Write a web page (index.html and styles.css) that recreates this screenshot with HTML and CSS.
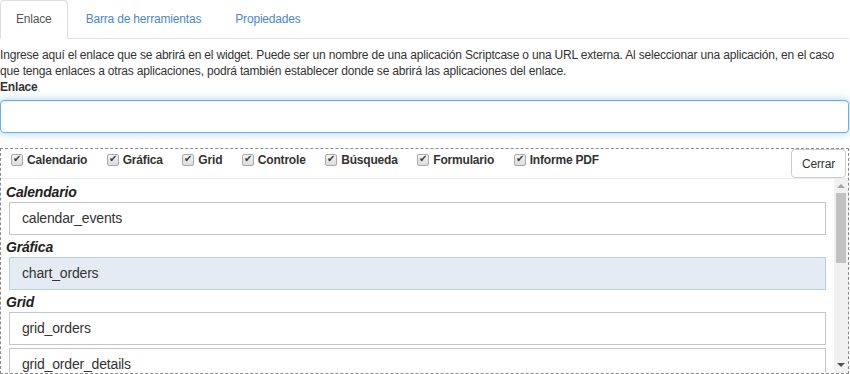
FILE: index.html
```html
<!DOCTYPE html>
<html lang="es">
<head>
    <meta charset="UTF-8">
    <title>Enlace</title>
    <link rel="stylesheet" href="styles.css">
</head>
<body>
    <div class="page">
        <ul class="tabs">
            <li class="tab active"><a>Enlace</a></li>
            <li class="tab"><a>Barra de herramientas</a></li>
            <li class="tab"><a>Propiedades</a></li>
        </ul>

        <div class="desc">
            <p>Ingrese aquí el enlace que se abrirá en el widget. Puede ser un nombre de una aplicación Scriptcase o una URL externa. Al seleccionar una aplicación, en el caso que tenga enlaces a otras aplicaciones, podrá también establecer donde se abrirá las aplicaciones del enlace.</p>
            <label class="field-label">Enlace</label>
        </div>
        <input type="text" class="link-input">

        <div class="picker">
            <div class="filters">
                <label class="filter"><input type="checkbox" checked> Calendario</label>
                <label class="filter"><input type="checkbox" checked> Gráfica</label>
                <label class="filter"><input type="checkbox" checked> Grid</label>
                <label class="filter"><input type="checkbox" checked> Controle</label>
                <label class="filter"><input type="checkbox" checked> Búsqueda</label>
                <label class="filter"><input type="checkbox" checked> Formulario</label>
                <label class="filter"><input type="checkbox" checked> Informe PDF</label>
                <button class="close-btn">Cerrar</button>
            </div>
            <div class="apps-wrap">
                <div class="apps">
                    <div class="group">Calendario</div>
                    <div class="app">calendar_events</div>
                    <div class="group">Gráfica</div>
                    <div class="app selected">chart_orders</div>
                    <div class="group">Grid</div>
                    <div class="app">grid_orders</div>
                    <div class="app">grid_order_details</div>
                </div>
                <div class="scrollbar">
                    <span class="arrow up"></span>
                    <span class="thumb"></span>
                    <span class="arrow down"></span>
                </div>
            </div>
        </div>
    </div>
</body>
</html>
```

FILE: styles.css
```css
body {
    margin: 0;
    font-family: "Liberation Sans", Arial, sans-serif;
    font-size: 12px;
    letter-spacing: -0.015em;
    color: #333;
    background: #fff;
}
.page {
    width: 849px;
}
.tabs {
    display: flex;
    list-style: none;
    margin: 0;
    padding: 0;
    border-bottom: 1px solid #ddd;
}
.tab {
    margin-right: 2px;
    margin-bottom: -1px;
}
.tab a {
    display: block;
    padding: 10px 15px;
    line-height: 17px;
    border: 1px solid transparent;
    border-radius: 4px 4px 0 0;
    color: #4a88cf;
}
.tab.active a {
    color: #555;
    background: #fff;
    border-color: #ddd #ddd transparent;
}
.desc {
    padding-top: 8px;
    line-height: 16px;
}
.desc p {
    margin: 0;
}
.field-label {
    display: block;
    font-weight: bold;
}
.link-input {
    display: block;
    box-sizing: border-box;
    width: 849px;
    height: 33px;
    margin: 5px 0 0;
    border: 1px solid #66afe9;
    border-radius: 4px;
    box-shadow: inset 0 1px 1px rgba(0, 0, 0, .075), 0 0 8px rgba(102, 175, 233, .6);
    outline: none;
}
.picker {
    margin-top: 15px;
    border: 1px dashed #8a8a8a;
    height: 224px;
}
.filters {
    display: flex;
    align-items: flex-start;
    height: 29px;
    border-bottom: 1px solid #e5ecf2;
    padding-left: 10px;
}
.filter {
    display: flex;
    align-items: center;
    margin-top: 4px;
    margin-right: 19.5px;
    font-weight: bold;
    color: #333;
}
.filter input {
    appearance: none;
    -webkit-appearance: none;
    position: relative;
    box-sizing: border-box;
    width: 12px;
    height: 12px;
    margin: 0 4px 0 0;
    border: 1px solid #a9a9a9;
    border-radius: 2px;
    background: linear-gradient(#f4f4f4, #dcdcdc);
}
.filter input:checked::after {
    content: "\2714";
    position: absolute;
    left: 1px;
    top: -2px;
    font-size: 10px;
    line-height: 12px;
    color: #3a3a3a;
}
.close-btn {
    margin-left: auto;
    margin-right: 2px;
    height: 29px;
    padding: 0 10px;
    background: #fff;
    border: 1px solid #ccc;
    border-radius: 4px;
    font-family: inherit;
    font-size: 12px;
    letter-spacing: -0.015em;
    color: #333;
}
.apps-wrap {
    display: flex;
    height: 194px;
}
.apps {
    flex: 1;
    overflow: hidden;
    padding: 4px 8px 0 5px;
}
.group {
    font-size: 14px;
    font-weight: bold;
    font-style: italic;
    color: #222;
    line-height: 19px;
}
.app {
    margin: 0 0 3px 3px;
    height: 33px;
    line-height: 31px;
    box-sizing: border-box;
    padding-left: 12px;
    border: 1px solid #c6c6c6;
    font-size: 14px;
    color: #333;
}
.app.selected {
    background: #e4ebf2;
    border-color: #b9cde3;
}
.scrollbar {
    width: 14px;
    background: #f1f1f1;
    display: flex;
    flex-direction: column;
    align-items: center;
}
.arrow {
    width: 0;
    height: 0;
    border-left: 4px solid transparent;
    border-right: 4px solid transparent;
}
.arrow.up {
    margin-top: 5px;
    border-bottom: 4px solid #a3a3a3;
}
.arrow.down {
    margin-top: auto;
    margin-bottom: 6px;
    border-top: 4px solid #505050;
}
.thumb {
    width: 10px;
    height: 70px;
    margin-top: 5px;
    background: #c1c1c1;
}
```
